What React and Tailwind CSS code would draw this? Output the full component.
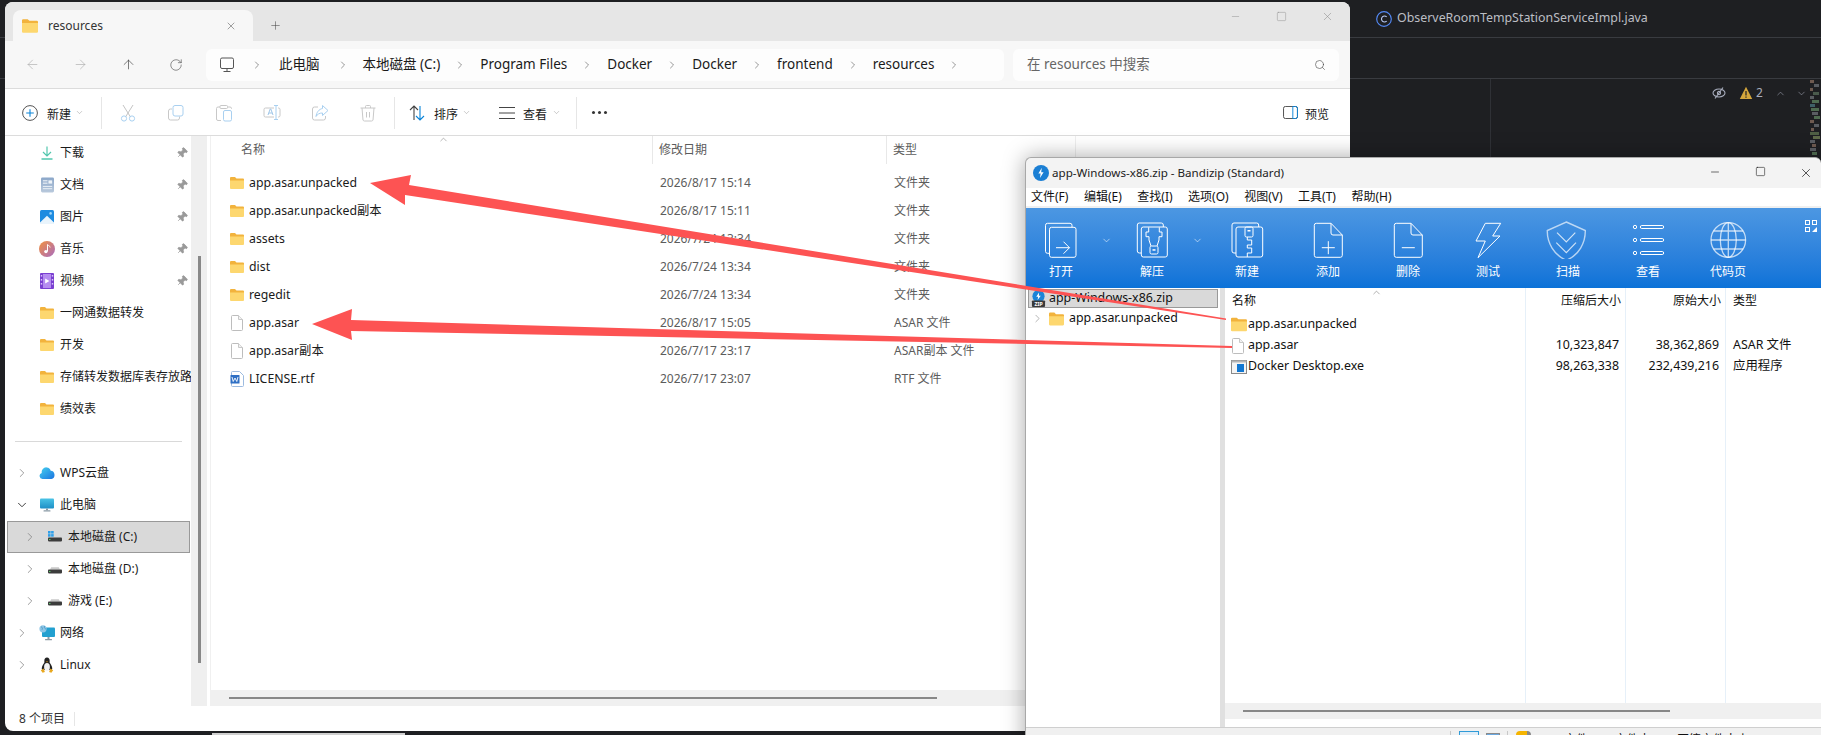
import React from 'react'
import {
  ArrowLeft,
  ArrowRight,
  ArrowUp,
  RotateCw,
  ChevronRight,
  ChevronDown,
  ChevronUp,
  Search,
  X,
  Plus,
  Minus,
  Square,
  Pin,
} from 'lucide-react'

const folderRows = [
  { name: 'app.asar.unpacked', date: '2026/8/17 15:14', type: '文件夹', icon: 'folder' },
  { name: 'app.asar.unpacked副本', date: '2026/8/17 15:11', type: '文件夹', icon: 'folder' },
  { name: 'assets', date: '2026/7/24 13:34', type: '文件夹', icon: 'folder' },
  { name: 'dist', date: '2026/7/24 13:34', type: '文件夹', icon: 'folder' },
  { name: 'regedit', date: '2026/7/24 13:34', type: '文件夹', icon: 'folder' },
  { name: 'app.asar', date: '2026/8/17 15:05', type: 'ASAR 文件', icon: 'file' },
  { name: 'app.asar副本', date: '2026/7/17 23:17', type: 'ASAR副本 文件', icon: 'file' },
  { name: 'LICENSE.rtf', date: '2026/7/17 23:07', type: 'RTF 文件', icon: 'rtf' },
]

const quickAccess = [
  { label: '下载', icon: <DownloadIcon />, pin: true },
  { label: '文档', icon: <DocsIcon />, pin: true },
  { label: '图片', icon: <PictureIcon />, pin: true },
  { label: '音乐', icon: <MusicIcon />, pin: true },
  { label: '视频', icon: <VideoIcon />, pin: true },
  { label: '一网通数据转发', icon: <FolderIcon /> },
  { label: '开发', icon: <FolderIcon /> },
  { label: '存储转发数据库表存放路径', icon: <FolderIcon /> },
  { label: '绩效表', icon: <FolderIcon /> },
]

const addressParts = ['此电脑', '本地磁盘 (C:)', 'Program Files', 'Docker', 'Docker', 'frontend', 'resources']
const menuItems = ['文件(F)', '编辑(E)', '查找(I)', '选项(O)', '视图(V)', '工具(T)', '帮助(H)']

const zipColumns = [
  { title: '名称', width: 'w-[301px]', cells: [] },
  { title: '压缩后大小', width: 'w-[100px]', right: true, cells: ['', '10,323,847', '98,263,338'] },
  { title: '原始大小', width: 'w-[100px]', right: true, cells: ['', '38,362,869', '232,439,216'] },
  { title: '类型', width: 'flex-1', cells: ['', 'ASAR 文件', '应用程序'] },
]

const minimap = [
  [80, 0, 4, '#6e5a50'], [84, 4, 5, '#5a5d62'], [88, 0, 3, '#6e5a50'], [92, 3, 6, '#4a5a4c'],
  [96, 0, 4, '#5a5d62'], [100, 2, 7, '#4f6b50'], [104, 0, 5, '#3f5f66'], [108, 1, 8, '#4f6b50'],
  [112, 2, 6, '#5a5d62'], [116, 4, 6, '#4f6b50'], [120, 0, 4, '#6e5a50'], [124, 4, 5, '#5a5d62'],
  [128, 1, 3, '#6e5a50'], [132, 0, 9, '#4f5f44'], [136, 3, 7, '#5f6b4a'], [140, 0, 5, '#5a5d62'],
  [144, 2, 4, '#6e5a50'], [148, 0, 6, '#5a5d62'], [152, 2, 5, '#4f6b50'],
]

function FolderIcon({ className = 'w-[14px] h-[12px]' }) {
  return (
    <svg viewBox="0 0 14 12" className={className}>
      <path d="M0 1a1 1 0 0 1 1-1h4l1.5 1.5H13a1 1 0 0 1 1 1V5H0Z" fill="#f2b33d" />
      <path d="M0 3.4h14V11a1 1 0 0 1-1 1H1a1 1 0 0 1-1-1Z" fill="#fdd76f" />
    </svg>
  )
}

function FileIcon() {
  return (
    <svg viewBox="0 0 12 16" className="w-[12px] h-[16px]">
      <path d="M.5 1.5a1 1 0 0 1 1-1h6l4 4v10a1 1 0 0 1-1 1h-9a1 1 0 0 1-1-1Z" fill="#fff" stroke="#bdbdbd" />
      <path d="M7.5.5v4h4" fill="#f2f2f2" stroke="#c8c8c8" />
    </svg>
  )
}

function RtfIcon() {
  return (
    <svg viewBox="0 0 14 16" className="w-[14px] h-[16px]">
      <path d="M1.5 1.5a1 1 0 0 1 1-1h7l4 4v10a1 1 0 0 1-1 1h-10a1 1 0 0 1-1-1Z" fill="#fff" stroke="#9dbbe0" />
      <rect x="0.5" y="4" width="9" height="8.5" rx="0.5" fill="#2f6fc4" />
      <path d="M2 6l1.2 4.5L5 7l1.8 3.5L8 6" fill="none" stroke="#fff" strokeWidth="0.9" />
    </svg>
  )
}

function DownloadIcon() {
  return (
    <svg viewBox="0 0 14 14" className="w-[14px] h-[14px]" fill="none" stroke="#52c7ae" strokeWidth="1.2">
      <path d="M7 .5v9M3 6l4 4 4-4" />
      <path d="M1.5 13h11" strokeWidth="1.4" />
    </svg>
  )
}

function DocsIcon() {
  return (
    <svg viewBox="0 0 14 16" className="w-[13px] h-[16px]">
      <defs>
        <linearGradient id="docGrad" x1="0" y1="0" x2="0" y2="1">
          <stop offset="0" stopColor="#8ba7c9" />
          <stop offset="1" stopColor="#b9c9dc" />
        </linearGradient>
      </defs>
      <rect width="14" height="16" rx="1.5" fill="url(#docGrad)" />
      <rect x="2" y="3" width="5" height="1" fill="#fff" />
      <rect x="2" y="5.5" width="5" height="1" fill="#fff" />
      <rect x="8" y="3" width="4" height="3.5" fill="#eef3f8" />
      <rect x="2" y="9" width="10" height="1" fill="#eef3f8" />
      <rect x="2" y="11.5" width="10" height="1" fill="#eef3f8" />
    </svg>
  )
}

function PictureIcon() {
  return (
    <svg viewBox="0 0 14 14" className="w-[14px] h-[14px]">
      <rect width="14" height="14" rx="1.5" fill="#1e8be0" />
      <path d="M0 12.5 7 5.8l7 6.7V14H0Z" fill="#e9f4fc" />
      <circle cx="10.6" cy="3.4" r="1.3" fill="#9fd4f7" />
    </svg>
  )
}

function MusicIcon() {
  return (
    <svg viewBox="0 0 16 16" className="w-[16px] h-[16px]">
      <defs>
        <linearGradient id="musicGrad" x1="0" y1="0" x2="1" y2="1">
          <stop offset="0" stopColor="#f2913f" />
          <stop offset="1" stopColor="#a86bc0" />
        </linearGradient>
      </defs>
      <circle cx="8" cy="8" r="8" fill="url(#musicGrad)" />
      <path d="M8.5 3.5v7" stroke="#fff" strokeWidth="1" />
      <path d="M8.5 3.5c1 1.4 2.6 1.2 2.6 3" fill="none" stroke="#fff" strokeWidth="0.9" />
      <circle cx="6.9" cy="10.6" r="1.7" fill="#fff" />
    </svg>
  )
}

function VideoIcon() {
  return (
    <svg viewBox="0 0 14 16" className="w-[14px] h-[16px]">
      <rect width="14" height="16" rx="1" fill="#7a3fd1" />
      <rect x="3" y="1" width="8" height="14" fill="#b58cf0" />
      <path d="M5.2 5.5v5l4.2-2.5Z" fill="#fff" />
      <g fill="#d9c4f7">
        <rect x="0.8" y="2" width="1.4" height="1.6" />
        <rect x="0.8" y="6" width="1.4" height="1.6" />
        <rect x="0.8" y="10" width="1.4" height="1.6" />
        <rect x="11.8" y="2" width="1.4" height="1.6" />
        <rect x="11.8" y="6" width="1.4" height="1.6" />
        <rect x="11.8" y="10" width="1.4" height="1.6" />
      </g>
    </svg>
  )
}

function CloudIcon() {
  return (
    <svg viewBox="0 0 16 12" className="w-[16px] h-[12px]">
      <defs>
        <linearGradient id="cloudGrad" x1="0" y1="0" x2="1" y2="1">
          <stop offset="0" stopColor="#45d0ef" />
          <stop offset="1" stopColor="#1a74e0" />
        </linearGradient>
      </defs>
      <path d="M3.5 12a3 3 0 0 1-.7-5.9A4.6 4.6 0 0 1 7.7.4a4.4 4.4 0 0 1 4 3.4 4.2 4.2 0 0 1 .8 8.2Z" fill="url(#cloudGrad)" />
    </svg>
  )
}

function MonitorIcon() {
  return (
    <svg viewBox="0 0 14 14" className="w-[14px] h-[14px]">
      <defs>
        <linearGradient id="monGrad" x1="0" y1="0" x2="0" y2="1">
          <stop offset="0" stopColor="#49c3e6" />
          <stop offset="1" stopColor="#1e8fc6" />
        </linearGradient>
      </defs>
      <rect y="0.5" width="14" height="10" rx="1" fill="url(#monGrad)" />
      <rect x="6" y="10.5" width="2" height="1.8" fill="#8a9aa5" />
      <rect x="3.5" y="12.2" width="7" height="1.2" rx="0.5" fill="#8a9aa5" />
    </svg>
  )
}

function DriveIcon({ system }) {
  return (
    <svg viewBox="0 0 14 12" className="w-[14px] h-[12px]">
      {system ? (
        <g fill="#2f9fe8">
          <rect x="0" y="0" width="2.6" height="2.6" />
          <rect x="3.1" y="0" width="2.6" height="2.6" />
          <rect x="0" y="3.1" width="2.6" height="2.6" />
          <rect x="3.1" y="3.1" width="2.6" height="2.6" />
        </g>
      ) : (
        <path d="M2 6.5 3.2 4.3h7.6L12 6.5Z" fill="#c9c9c9" />
      )}
      <rect y="6.6" width="14" height="3.8" rx="0.8" fill="#3c3c3c" />
      <rect x="1" y="8" width="1.5" height="1" fill="#58c968" />
    </svg>
  )
}

function NetworkIcon() {
  return (
    <svg viewBox="0 0 16 16" className="w-[16px] h-[16px]">
      <rect x="3" y="2.5" width="13" height="9.5" rx="1" fill="#22a0d0" />
      <rect x="8.5" y="12" width="2" height="2" fill="#8a9aa5" />
      <rect x="6" y="14" width="7" height="1.2" rx="0.5" fill="#8a9aa5" />
      <circle cx="4" cy="3.8" r="3.6" fill="#8fc6e6" />
      <path d="M2 1.6c1.4.6 1.8 2 1 3.2M5.6 1c-.8 1.4 0 2.6 1.4 3.2" stroke="#3f8fbd" strokeWidth="0.7" fill="none" />
    </svg>
  )
}

function PenguinIcon() {
  return (
    <svg viewBox="0 0 14 16" className="w-[14px] h-[16px]">
      <ellipse cx="7" cy="4" rx="2.7" ry="3.6" fill="#222" />
      <path d="M4.4 5.5C2.2 8.5 1 11 2.2 13h9.6c1.2-2 0-4.5-2.2-7.5Z" fill="#222" />
      <ellipse cx="7" cy="10" rx="2.9" ry="4" fill="#f2f2f2" />
      <path d="M5.8 4.4h2.4L7 5.6Z" fill="#e8a820" />
      <path d="M.8 13.2 3.6 11.5l1.3 3.6-2.3.7Zm12.4 0L10.4 11.5l-1.3 3.6 2.3.7Z" fill="#e8a820" />
    </svg>
  )
}

function SideRow({ icon, label, pin, chevron, child, selected }) {
  const Chev = chevron === 'open' ? ChevronDown : ChevronRight
  return (
    <div
      className={`h-[32px] flex items-center whitespace-nowrap text-[#1a1a1a] ${
        selected ? 'ml-[2px] mr-[1px] bg-[#d9d9d9] border border-[#999999] pl-[15px]' : child ? 'pl-[18px]' : 'pl-[10px]'
      }`}
    >
      <span className="w-[14px] flex justify-center shrink-0">
        {chevron && <Chev size={14} strokeWidth={chevron === 'open' ? 1.6 : 1.3} className={chevron === 'open' ? 'text-[#333333]' : 'text-[#808080]'} />}
      </span>
      <span className="w-[16px] ml-[10px] flex justify-center shrink-0">{icon}</span>
      <span className="ml-[5px]">{label}</span>
      {pin && <Pin size={12} strokeWidth={1.5} fill="#9a9a9a" className="absolute left-[171px] text-[#9a9a9a] rotate-45" />}
    </div>
  )
}

function ToolSlot({ children }) {
  return <div className="w-[48px] flex justify-center">{children}</div>
}

function ToolDivider({ className }) {
  return <div className={`w-px h-[32px] bg-[#e6e6e6] ${className}`} />
}

function CutIcon() {
  return (
    <svg viewBox="0 0 18 18" className="w-[18px] h-[18px]" fill="none" stroke="#a9d0f0" strokeWidth="1">
      <path d="M4 1l7.5 12M14 1L6.5 13" stroke="#c4c4c4" />
      <circle cx="5" cy="14.5" r="2.6" />
      <circle cx="13" cy="14.5" r="2.6" />
    </svg>
  )
}

function CopyIcon() {
  return (
    <svg viewBox="0 0 18 18" className="w-[18px] h-[18px]" fill="none" strokeWidth="1">
      <path d="M5 5H3.5a2 2 0 0 0-2 2v7a2 2 0 0 0 2 2h7a2 2 0 0 0 2-2v-1.5" stroke="#c8c8c8" />
      <rect x="6" y="1.5" width="10" height="10.5" rx="2" stroke="#a9d0f0" />
    </svg>
  )
}

function PasteIcon() {
  return (
    <svg viewBox="0 0 18 18" className="w-[18px] h-[18px]" fill="none" strokeWidth="1">
      <path d="M5 3H3a1.5 1.5 0 0 0-1.5 1.5V15A1.5 1.5 0 0 0 3 16.5h3M12.5 3H15a1.5 1.5 0 0 1 1.5 1.5V5" stroke="#c8c8c8" />
      <rect x="5" y="1.5" width="7.5" height="3" rx="1" stroke="#c8c8c8" />
      <rect x="8.5" y="6.5" width="8" height="10.5" rx="1.5" stroke="#a9d0f0" />
    </svg>
  )
}

function RenameIcon() {
  return (
    <svg viewBox="0 0 18 18" className="w-[18px] h-[18px]" fill="none" strokeWidth="1">
      <path d="M11 4H2.5A1.5 1.5 0 0 0 1 5.5v6A1.5 1.5 0 0 0 2.5 13H11M15 4h.5A1.5 1.5 0 0 1 17 5.5v6a1.5 1.5 0 0 1-1.5 1.5H15" stroke="#c8c8c8" />
      <path d="M5 11l2.2-6h.6L10 11M5.8 9h3.4" stroke="#9fc6e8" />
      <path d="M11 1.5h4M13 1.5v14M11 15.5h4" stroke="#a9d0f0" />
    </svg>
  )
}

function ShareIcon() {
  return (
    <svg viewBox="0 0 18 18" className="w-[18px] h-[18px]" fill="none" strokeWidth="1">
      <path d="M7 3H3.5a2 2 0 0 0-2 2v9a2 2 0 0 0 2 2h9a2 2 0 0 0 2-2v-2" stroke="#c8c8c8" />
      <path d="M11.5 1.5 17 6.5l-5.5 5V9C8.5 9 6.5 10 5 12.5 5.5 8.5 8 5 11.5 4.5Z" stroke="#a9d0f0" />
    </svg>
  )
}

function TrashIcon() {
  return (
    <svg viewBox="0 0 18 18" className="w-[18px] h-[18px]" fill="none" stroke="#c8c8c8" strokeWidth="1">
      <path d="M1.5 4h15M6.5 4V2.5a1 1 0 0 1 1-1h3a1 1 0 0 1 1 1V4" />
      <path d="M3 4l1 12a1.5 1.5 0 0 0 1.5 1h7a1.5 1.5 0 0 0 1.5-1l1-12" />
      <path d="M7.5 8v5.5M10.5 8v5.5" />
    </svg>
  )
}

function Explorer() {
  return (
    <div className="absolute left-[5px] top-[2px] w-[1345px] h-[729px] rounded-lg bg-white overflow-hidden flex flex-col text-[12px]">
      {/* tab strip */}
      <div className="h-[39px] shrink-0 bg-[#e6e6e6] flex items-start">
        <div className="ml-[8px] mt-[8px] w-[240px] h-[31px] bg-[#f7f7f7] rounded-t-lg flex items-center pl-[9px] shrink-0">
          <FolderIcon className="w-[16px] h-[14px]" />
          <span className="ml-[10px] text-[#333333]">resources</span>
          <X size={12} strokeWidth={1} className="ml-auto mr-[16px] text-[#444444]" />
        </div>
        <Plus size={13} strokeWidth={1} className="ml-[16px] mt-[17px] text-[#444444]" />
        <div className="ml-auto flex text-[#8a8a8a]">
          <div className="w-[45px] h-[28px] flex items-center justify-center"><Minus size={11} strokeWidth={1} /></div>
          <div className="w-[46px] h-[28px] flex items-center justify-center"><Square size={11} strokeWidth={1} /></div>
          <div className="w-[46px] h-[28px] flex items-center justify-center"><X size={13} strokeWidth={1} /></div>
        </div>
      </div>

      {/* nav row */}
      <div className="h-[48px] shrink-0 bg-[#f7f7f7] border-b border-[#dcdcdc] flex items-center">
        <ArrowLeft size={15} strokeWidth={1} className="ml-[20px] text-[#a8a8a8]" />
        <ArrowRight size={15} strokeWidth={1} className="ml-[33px] text-[#a8a8a8]" />
        <ArrowUp size={15} strokeWidth={1} className="ml-[33px] text-[#333333]" />
        <RotateCw size={14} strokeWidth={1} className="ml-[33px] text-[#444444]" />
        <div className="ml-[23px] w-[798px] h-[32px] bg-[#fdfdfd] rounded-md flex items-center text-[#1a1a1a] text-[13.5px]">
          <svg viewBox="0 0 16 16" className="ml-[13px] w-[16px] h-[16px]" fill="none" stroke="#555555" strokeWidth="1">
            <rect x="1.5" y="1" width="13" height="10.5" rx="1.5" />
            <path d="M8 11.5V14M4.5 14.5h7" />
          </svg>
          <ChevronRight size={12} strokeWidth={1} className="ml-[16px] text-[#333333]" />
          {addressParts.map((part, i) => (
            <React.Fragment key={i}>
              <span className={`${i === 0 ? 'ml-[16px]' : 'ml-[14px]'} whitespace-nowrap`}>{part}</span>
              <ChevronRight size={12} strokeWidth={1} className={`${i === 0 ? 'ml-[17px]' : 'ml-[14px]'} text-[#333333]`} />
            </React.Fragment>
          ))}
        </div>
        <div className="ml-[9px] w-[326px] h-[32px] bg-[#fdfdfd] rounded-md flex items-center pl-[14px] text-[#666666] text-[13.5px]">
          在 resources 中搜索
          <Search size={12} strokeWidth={1.2} className="ml-auto mr-[13px] text-[#444444]" />
        </div>
      </div>

      {/* command bar */}
      <div className="h-[47px] shrink-0 border-b border-[#dcdcdc] flex items-center pt-px text-[#1a1a1a]">
        <svg viewBox="0 0 16 16" className="ml-[17px] w-[16px] h-[16px]" fill="none" strokeWidth="1">
          <circle cx="8" cy="8" r="7.4" stroke="#555555" />
          <path d="M8 4.2v7.6M4.2 8h7.6" stroke="#0a84d8" strokeWidth="1.1" />
        </svg>
        <span className="ml-[9px] pt-[4px]">新建</span>
        <ChevronDown size={9} strokeWidth={1} className="ml-[4px] text-[#777777]" />
        <ToolDivider className="ml-[17px]" />
        <div className="ml-[2px] flex">
          <ToolSlot><CutIcon /></ToolSlot>
          <ToolSlot><CopyIcon /></ToolSlot>
          <ToolSlot><PasteIcon /></ToolSlot>
          <ToolSlot><RenameIcon /></ToolSlot>
          <ToolSlot><ShareIcon /></ToolSlot>
          <ToolSlot><TrashIcon /></ToolSlot>
        </div>
        <ToolDivider className="ml-[2px]" />
        <svg viewBox="0 0 18 18" className="ml-[13px] w-[18px] h-[18px]" fill="none" strokeWidth="1.1">
          <path d="M6 16V2M2 6l4-4 4 4" stroke="#444444" />
          <path d="M12 2v14M8 12l4 4 4-4" stroke="#0a84d8" />
        </svg>
        <span className="ml-[8px] pt-[4px]">排序</span>
        <ChevronDown size={9} strokeWidth={1} className="ml-[4px] text-[#777777]" />
        <svg viewBox="0 0 18 14" className="ml-[27px] w-[18px] h-[14px]" fill="none" stroke="#444444" strokeWidth="1">
          <path d="M1 1.5h16M1 7h16M1 12.5h16" />
        </svg>
        <span className="ml-[7px] pt-[4px]">查看</span>
        <ChevronDown size={9} strokeWidth={1} className="ml-[5px] text-[#777777]" />
        <ToolDivider className="ml-[15px]" />
        <div className="ml-[15px] flex gap-[3px]">
          <span className="w-[3px] h-[3px] rounded-full bg-[#333333]" />
          <span className="w-[3px] h-[3px] rounded-full bg-[#333333]" />
          <span className="w-[3px] h-[3px] rounded-full bg-[#333333]" />
        </div>
        <svg viewBox="0 0 16 14" className="ml-auto w-[15px] h-[13px]" fill="none" strokeWidth="1">
          <rect x="0.5" y="0.5" width="15" height="13" rx="2" stroke="#444444" />
          <path d="M10.5.5h3a2 2 0 0 1 2 2v9a2 2 0 0 1-2 2h-3Z" stroke="#0a84d8" />
        </svg>
        <span className="ml-[7px] mr-[21px] pt-[4px]">预览</span>
      </div>

      {/* body */}
      <div className="h-[570px] shrink-0 flex">
        <div className="relative w-[186px] shrink-0 overflow-hidden pt-px">
          {quickAccess.map((item) => (
            <SideRow key={item.label} {...item} />
          ))}
          <div className="mt-[16px] ml-[10px] w-[167px] h-px bg-[#d9d9d9]" />
          <div className="mt-[15px]">
            <SideRow chevron="right" icon={<CloudIcon />} label="WPS云盘" />
            <SideRow chevron="open" icon={<MonitorIcon />} label="此电脑" />
            <SideRow chevron="right" child selected icon={<DriveIcon system />} label="本地磁盘 (C:)" />
            <SideRow chevron="right" child icon={<DriveIcon />} label="本地磁盘 (D:)" />
            <SideRow chevron="right" child icon={<DriveIcon />} label="游戏 (E:)" />
            <SideRow chevron="right" icon={<NetworkIcon />} label="网络" />
            <SideRow chevron="right" icon={<PenguinIcon />} label="Linux" />
          </div>
        </div>
        <div className="w-[16px] shrink-0 bg-[#efefef]">
          <div className="mt-[120px] ml-[7px] w-[2.5px] h-[407px] bg-[#888888]" />
        </div>
        <div className="flex-1 ml-[3px] flex flex-col min-w-0 border-l border-[#f0f0f0]">
          <div className="flex-1">
            <div className="relative h-[33px] flex text-[#5c5c5c]">
              <ChevronUp size={11} strokeWidth={1} className="absolute left-[227px] top-[-2px] text-[#666666]" />
              <div className="w-[442px] h-[28px] pl-[30px] flex items-center border-r border-[#e8e8e8]">名称</div>
              <div className="w-[234px] h-[28px] pl-[6px] flex items-center border-r border-[#e8e8e8]">修改日期</div>
              <div className="w-[189px] h-[28px] pl-[6px] flex items-center border-r border-[#eeeeee]">类型</div>
            </div>
            {folderRows.map((row) => (
              <div key={row.name} className="h-[28px] flex items-center">
                <div className="w-[442px] pl-[19px] flex items-center text-[#1a1a1a]">
                  <span className="w-[14px] flex justify-center">
                    {row.icon === 'folder' && <FolderIcon />}
                    {row.icon === 'file' && <FileIcon />}
                    {row.icon === 'rtf' && <RtfIcon />}
                  </span>
                  <span className="ml-[5px] text-[12.3px]">{row.name}</span>
                </div>
                <div className="w-[234px] pl-[7px] text-[#5c5c5c]">{row.date}</div>
                <div className="pl-[7px] text-[#5c5c5c]">{row.type}</div>
              </div>
            ))}
          </div>
          <div className="h-[16px] bg-[#f0f0f0] shrink-0 pt-[7px]">
            <div className="ml-[18px] w-[708px] h-[2px] bg-[#888888]" />
          </div>
        </div>
      </div>

      {/* status */}
      <div className="h-[25px] shrink-0 flex items-center text-[#333333]">
        <span className="ml-[14px]">8 个项目</span>
        <span className="ml-[9px] w-px h-[14px] bg-[#e6e6e6]" />
      </div>
    </div>
  )
}

function BlueTool({ label, width, children }) {
  return (
    <div className={`${width} shrink-0 flex flex-col items-center`}>
      <svg viewBox="0 0 44 38" className="w-[44px] h-[38px]" fill="none" stroke="#ffffff" strokeWidth="1">
        {children}
      </svg>
      <span className="mt-[4px] h-[18px] leading-[18px] text-white text-[12px]">{label}</span>
    </div>
  )
}

function BlueChevron({ width }) {
  return (
    <div className={`${width} shrink-0 h-[38px] flex justify-center items-center`}>
      <ChevronDown size={11} strokeWidth={1.2} className="text-white" />
    </div>
  )
}

function ZipAppIcon() {
  return (
    <svg viewBox="0 0 16 18" className="w-[15px] h-[17px] shrink-0">
      <circle cx="8" cy="6.5" r="6.5" fill="#1b84d8" />
      <path d="M8.6 2.5 5.6 7h2l-.6 3.5L10.4 6h-2Z" fill="#fff" />
      <rect x="1" y="11" width="14" height="7" rx="1" fill="#3a3a3a" />
      <text x="8" y="16.6" textAnchor="middle" fontSize="5.5" fontWeight="700" fill="#fff">ZIP</text>
    </svg>
  )
}

function Bandizip() {
  return (
    <div className="absolute left-[1025px] top-[157px] w-[796px] h-[600px] bg-[#f3f3f3] rounded-t-md border-l border-t border-[#a8a8a8] shadow-[0_0_22px_rgba(0,0,0,0.35)] flex flex-col text-[12px] text-[#111111] overflow-hidden">
      <div className="h-[30px] shrink-0 flex items-center">
        <svg viewBox="0 0 16 16" className="ml-[7px] w-[16px] h-[16px]">
          <circle cx="8" cy="8" r="8" fill="#1b7fd4" />
          <path d="M8.8 2.8 5.4 8.4h2.2L7 13l3.6-5.8H8.2Z" fill="#fff" />
        </svg>
        <span className="ml-[3px] whitespace-nowrap text-[#222222] text-[11.6px]">app-Windows-x86.zip - Bandizip (Standard)</span>
        <div className="ml-auto flex text-[#111111]">
          <div className="w-[45px] flex justify-center"><Minus size={12} strokeWidth={1.2} /></div>
          <div className="w-[46px] flex justify-center"><Square size={11} strokeWidth={1.2} /></div>
          <div className="w-[46px] flex justify-center mr-[-8px]"><X size={14} strokeWidth={1.2} /></div>
        </div>
      </div>
      <div className="h-[18px] shrink-0 bg-white flex items-center pl-[5px] gap-[15.5px]">
        {menuItems.map((item) => (
          <span key={item}>{item}</span>
        ))}
      </div>
      <div className="h-[2px] shrink-0 bg-[#f0f0f0]" />
      <div className="h-[80px] shrink-0 bg-linear-to-b from-[#4c97e2] to-[#0a72d8] flex pt-[13px]">
        <BlueTool label="打开" width="w-[70px]">
          <path d="M10.5 32.3h-2a2 2 0 0 1-2-2V4.3a2 2 0 0 1 2-2H31a2 2 0 0 1 2 2v2" />
          <rect x="10.5" y="6.3" width="26.5" height="30" rx="2" />
          <path d="M17 26.7h13.5M24.5 20.7l6 6-6 6" />
        </BlueTool>
        <BlueChevron width="w-[20px]" />
        <BlueTool label="解压" width="w-[72px]">
          <path d="M11.3 32H9.3a2 2 0 0 1-2-2V4a2 2 0 0 1 2-2h22a2 2 0 0 1 2 2v2" />
          <rect x="11.3" y="6" width="26" height="30" rx="2" />
          <path d="M18.7 6.3V11H16v4.7h3V19l2 6M29.3 6.3V11H32v4.7h-3V19l-2 6" />
          <rect x="20" y="25" width="8" height="8" rx="1.5" />
          <rect x="22.5" y="28.2" width="3" height="1.5" fill="#fff" stroke="none" />
        </BlueTool>
        <BlueChevron width="w-[18px]" />
        <BlueTool label="新建" width="w-[82px]">
          <path d="M11 32H9a2 2 0 0 1-2-2V4a2 2 0 0 1 2-2h22.7a2 2 0 0 1 2 2v2" />
          <rect x="11" y="6" width="26.7" height="30" rx="2" />
          <rect x="20" y="6" width="8" height="10" rx="1.5" />
          <rect x="22.5" y="9" width="3" height="1.5" fill="#fff" stroke="none" />
          <path d="M22.3 16v3h4.4v5h-4.4v3h4.4v5h-4.4v4" />
        </BlueTool>
        <BlueTool label="添加" width="w-[80px]">
          <path d="M25 2.3H10.3a2 2 0 0 0-2 2v30a2 2 0 0 0 2 2h24a2 2 0 0 0 2-2V14Z" />
          <path d="M25 2.3V12a2 2 0 0 0 2 2h9.3" />
          <path d="M15.8 26.7h13M22.3 20.2v13" />
        </BlueTool>
        <BlueTool label="删除" width="w-[80px]">
          <path d="M25 2.3H10.3a2 2 0 0 0-2 2v30a2 2 0 0 0 2 2h24a2 2 0 0 0 2-2V14Z" />
          <path d="M25 2.3V12a2 2 0 0 0 2 2h9.3" />
          <path d="M15.8 26.7h13" />
        </BlueTool>
        <BlueTool label="测试" width="w-[80px]">
          <path d="M19.3 2.3h15.4L26.7 15H34L12 36.7 19.3 20H10Z" />
        </BlueTool>
        <BlueTool label="扫描" width="w-[80px]">
          <path d="M20.3 1l19 8.5c.2 12.5-6.3 24.5-19 29.8C8 34 1 22 1.3 9.5Z" strokeOpacity="0.65" strokeWidth="1.4" />
          <path d="M11 11.7l9.3 9.3 9-9.3M10.3 21.7l10 10 9.7-10" strokeOpacity="0.75" strokeWidth="1.2" />
        </BlueTool>
        <BlueTool label="查看" width="w-[80px]">
          <circle cx="9" cy="6" r="1.7" />
          <circle cx="9" cy="19" r="1.7" />
          <circle cx="9" cy="32" r="1.7" />
          <rect x="14.3" y="4.5" width="23.4" height="3" rx="1.5" />
          <rect x="14.3" y="17.5" width="23.4" height="3" rx="1.5" />
          <rect x="14.3" y="30.5" width="23.4" height="3" rx="1.5" />
        </BlueTool>
        <BlueTool label="代码页" width="w-[80px]">
          <g strokeOpacity="0.7" strokeWidth="1.3">
            <circle cx="22.3" cy="19" r="17.3" />
            <ellipse cx="22.3" cy="19" rx="8" ry="17.3" />
            <path d="M22.3 1.7v34.6M5 19h34.6M7.5 10h29.6M7.5 28h29.6" />
          </g>
        </BlueTool>
        <svg viewBox="0 0 12 12" className="ml-auto mr-[4px] mt-[-1px] w-[12px] h-[12px]" fill="none" stroke="#ffffff" strokeWidth="1">
          <rect x="0.5" y="0.5" width="4" height="4" />
          <rect x="7.5" y="0.5" width="4" height="4" />
          <rect x="0.5" y="7.5" width="4" height="4" />
          <path d="M12 7v5H7Z" fill="#ffffff" stroke="none" />
        </svg>
      </div>
      <div className="flex-1 bg-white flex min-h-0">
        <div className="w-[194px] shrink-0 pt-px text-[12.4px]">
          <div className="mx-[2px] h-[19px] bg-[#d9d9d9] border border-[#999999] flex items-center pl-[2px]">
            <ZipAppIcon />
            <span className="ml-[3px]">app-Windows-x86.zip</span>
          </div>
          <div className="h-[21px] flex items-center pl-[5px]">
            <ChevronRight size={13} strokeWidth={1} className="text-[#777777]" />
            <FolderIcon className="ml-[5px] w-[15px] h-[14px]" />
            <span className="ml-[5px]">app.asar.unpacked</span>
          </div>
        </div>
        <div className="w-[5px] shrink-0 bg-[#e0e0e0]" />
        <div className="flex-1 flex flex-col min-w-0">
          <div className="h-[415px] shrink-0 flex">
            {zipColumns.map((col, colIndex) => (
              <div key={col.title} className={`${col.width} relative ${colIndex < 3 ? 'border-r border-[#e6f0f9]' : ''}`}>
                {colIndex === 0 && <ChevronUp size={11} strokeWidth={1} className="absolute left-[146px] top-[-1px] text-[#555555]" />}
                <div className={`h-[26px] flex items-center ${col.right ? 'justify-end pr-[4px]' : 'pl-[7px]'}`}>{col.title}</div>
                {colIndex === 0 ? (
                  <div className="text-[12.4px]">
                    <div className="h-[21px] flex items-center pl-[6px]">
                      <FolderIcon className="w-[16px] h-[15px]" />
                      <span className="ml-[1px]">app.asar.unpacked</span>
                    </div>
                    <div className="h-[21px] flex items-center pl-[7px]">
                      <FileIcon />
                      <span className="ml-[4px]">app.asar</span>
                    </div>
                    <div className="h-[21px] flex items-center pl-[6px]">
                      <svg viewBox="0 0 16 16" className="w-[16px] h-[16px]">
                        <rect x="0.5" y="1.5" width="15" height="13" fill="#f4f4f4" stroke="#8a8a8a" />
                        <rect x="0.5" y="1.5" width="15" height="2" fill="#b5b5b5" />
                        <rect x="6" y="5" width="7" height="8" fill="#1278d2" />
                      </svg>
                      <span className="ml-[1px]">Docker Desktop.exe</span>
                    </div>
                  </div>
                ) : (
                  col.cells.map((cell, i) => (
                    <div key={i} className={`h-[21px] flex items-center text-[12.4px] ${col.right ? 'justify-end pr-[6px]' : 'pl-[7px]'}`}>{cell}</div>
                  ))
                )}
              </div>
            ))}
          </div>
          <div className="h-[16px] shrink-0 bg-[#f0f0f0] pt-[7px]">
            <div className="ml-[18px] w-[427px] h-[2px] bg-[#888888]" />
          </div>
          <div className="h-[2px] shrink-0" />
        </div>
      </div>
      <div className="h-[30px] shrink-0 bg-[#f0f0f0] border-t border-[#cfcfcf] flex items-start pt-[3px]">
        <span className="ml-[424px] w-px h-[20px] bg-[#c8c8c8]" />
        <span className="ml-[8px] w-[20px] h-[20px] border border-[#2f9bd8] bg-[#e1eef8]" />
        <span className="ml-[7px] mt-[2px] w-[14px] h-[14px] border border-[#8a8a8a] bg-[#6aa8e0]" />
        <span className="ml-[7px] w-px h-[20px] bg-[#c8c8c8]" />
        <span className="ml-[8px] w-[15px] h-[20px] bg-[#f5b400] rounded-sm border-r-4 border-[#888888]" />
        <span className="ml-[33px] whitespace-nowrap">文件: 34, 文件夹: 11, 压缩文件大小: 112 MB</span>
      </div>
    </div>
  )
}

function IdeBackground() {
  return (
    <div className="absolute inset-0 bg-[#1e1f22] flex flex-col">
      <div className="h-[38px] shrink-0 border-b border-[#393b40] flex items-center pl-[1376px]">
        <svg viewBox="0 0 14 14" className="w-[16px] h-[16px]" fill="none" stroke="#548af7" strokeWidth="1">
          <circle cx="7" cy="7" r="6.4" />
          <path d="M9.3 5.2A2.6 2.6 0 1 0 9.3 8.8" stroke="#b8c9f5" />
        </svg>
        <span className="ml-[5px] text-[12.4px] text-[#bcbec4] whitespace-nowrap">ObserveRoomTempStationServiceImpl.java</span>
      </div>
      <div className="h-[41px] shrink-0 border-b border-[#393b40]" />
      <div className="flex-1 flex">
        <div className="w-[1491px] shrink-0 border-r border-[#2f3136]" />
        <div className="flex-1 flex items-start pt-[7px] text-[#a8adbd]">
          <svg viewBox="0 0 14 14" className="ml-[221px] w-[14px] h-[14px]" fill="none" stroke="#a8adbd" strokeWidth="1.1">
            <ellipse cx="7" cy="7" rx="6" ry="4" />
            <circle cx="7" cy="7" r="1.6" />
            <path d="M11 1.5 3 12.5" />
          </svg>
          <svg viewBox="0 0 14 14" className="ml-[13px] w-[14px] h-[14px]">
            <path d="M7 .8 13.2 13H.8Z" fill="#d4a63c" />
            <path d="M7 5v4.5M7 10.5v1.2" stroke="#1e1f22" strokeWidth="1.2" />
          </svg>
          <span className="ml-[3px] text-[12px] leading-[14px]">2</span>
          <ChevronUp size={11} strokeWidth={1.2} className="ml-[12px] mt-[2px]" />
          <ChevronDown size={11} strokeWidth={1.2} className="ml-[10px] mt-[2px]" />
        </div>
      </div>
      {/* editor minimap */}
      <svg className="absolute left-[1810px] top-0 w-[11px] h-[160px]" viewBox="0 0 11 160">
        {minimap.map(([y, x, w, color]) => (
          <rect key={y} x={x} y={y} width={w} height="3" fill={color} />
        ))}
      </svg>
      <div className="absolute left-[212px] top-[733px] w-[193px] h-[2px] bg-[#cfcfcf]" />
    </div>
  )
}

function Arrows() {
  return (
    <svg className="absolute inset-0 w-[1821px] h-[735px] pointer-events-none" viewBox="0 0 1821 735" fill="#fd5353">
      <path d="M370 183 411 175 409 185 1226 318.5 1226 320 405 195 405 205Z" />
      <path d="M312 324 352 309 351 320 1232 346 1232 348 351 331 352 340Z" />
    </svg>
  )
}

export default function App() {
  return (
    <div className="relative w-[1821px] h-[735px] overflow-hidden font-['Noto_Sans','Noto_Sans_CJK_SC',sans-serif]">
      <IdeBackground />
      <Explorer />
      <Bandizip />
      <Arrows />
    </div>
  )
}
